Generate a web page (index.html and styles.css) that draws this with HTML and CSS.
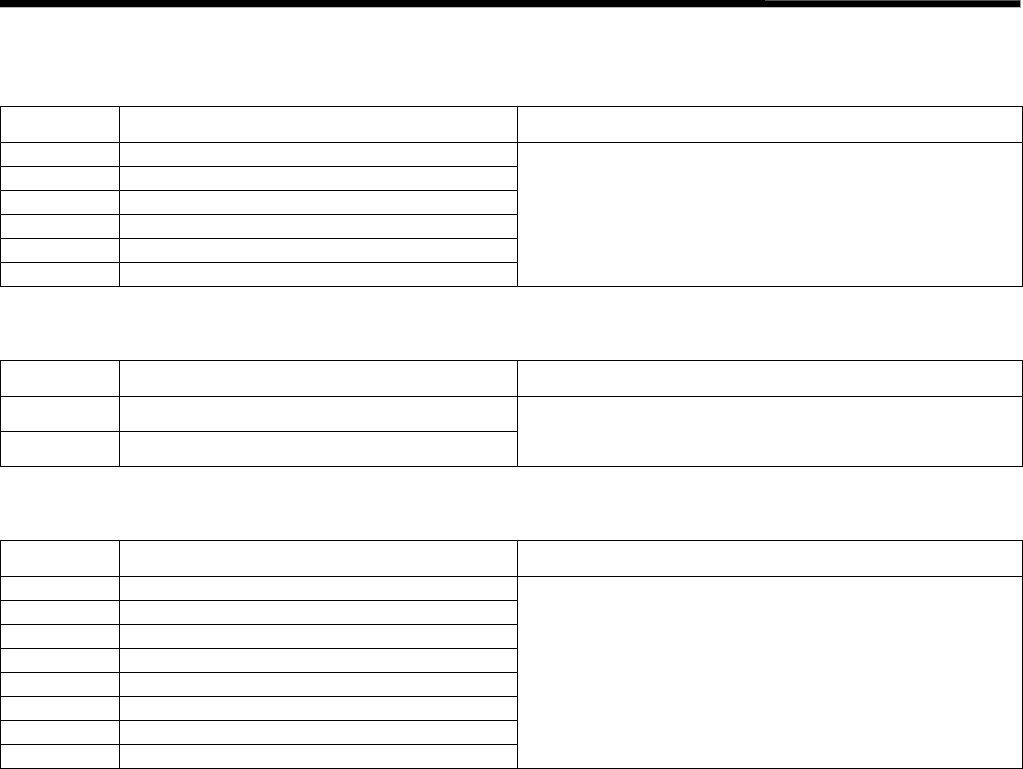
FILE: index.html
```html
<!DOCTYPE html>
<html>
<head>
<meta charset="utf-8">
<link rel="stylesheet" href="styles.css">
</head>
<body>
<div class="topbar"></div>
<main class="page">
  <table class="grid">
    <colgroup><col class="c1"><col class="c2"><col class="c3"></colgroup>
    <tr class="head"><td></td><td></td><td></td></tr>
    <tr class="row"><td></td><td></td><td rowspan="6"></td></tr>
    <tr class="row"><td></td><td></td></tr>
    <tr class="row"><td></td><td></td></tr>
    <tr class="row"><td></td><td></td></tr>
    <tr class="row"><td></td><td></td></tr>
    <tr class="row"><td></td><td></td></tr>
  </table>
  <table class="grid">
    <colgroup><col class="c1"><col class="c2"><col class="c3"></colgroup>
    <tr class="head"><td></td><td></td><td></td></tr>
    <tr class="tall"><td></td><td></td><td rowspan="2"></td></tr>
    <tr class="tall"><td></td><td></td></tr>
  </table>
  <table class="grid">
    <colgroup><col class="c1"><col class="c2"><col class="c3"></colgroup>
    <tr class="head"><td></td><td></td><td></td></tr>
    <tr class="row"><td></td><td></td><td rowspan="8"></td></tr>
    <tr class="row"><td></td><td></td></tr>
    <tr class="row"><td></td><td></td></tr>
    <tr class="row"><td></td><td></td></tr>
    <tr class="row"><td></td><td></td></tr>
    <tr class="row"><td></td><td></td></tr>
    <tr class="row"><td></td><td></td></tr>
    <tr class="row"><td></td><td></td></tr>
  </table>
</main>
</body>
</html>
```
FILE: styles.css
```css
html, body {
  margin: 0;
  padding: 0;
  background: #fff;
  font-family: "Liberation Sans", Arial, sans-serif;
}
.topbar {
  position: relative;
  width: 1020px;
  height: 7px;
  background: #000;
  border-bottom: 1px solid #bbb;
  border-right: 1px solid #999;
}
.topbar::after {
  content: "";
  position: absolute;
  top: 0;
  left: 765px;
  width: 255px;
  height: 1px;
  background: #555;
}
.page {
  display: flex;
  flex-direction: column;
  gap: 73px;
  padding-top: 98px;
}
.grid {
  border-collapse: collapse;
  width: 1023px;
  table-layout: fixed;
}
.grid td {
  border: 1.5px solid #000;
  padding: 0;
}
.c1 { width: 119px; }
.c2 { width: 398px; }
.head td { height: 35px; }
.row td { height: 23px; }
.tall td { height: 34px; }
```
